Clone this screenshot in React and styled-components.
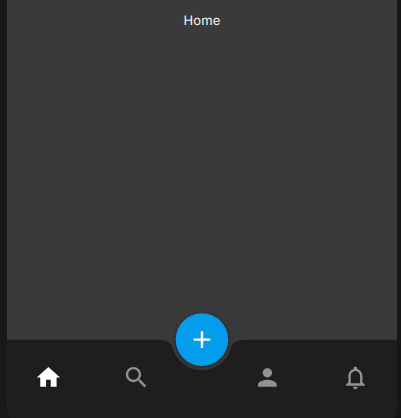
import React from "react";
import styled, { createGlobalStyle } from "styled-components";

const GlobalStyle = createGlobalStyle`
  * { box-sizing: border-box; }
  html, body { margin: 0; padding: 0; background: #191919; overflow: hidden; }
  button { border: 0; padding: 0; background: none; }
`;

const Page = styled.div`
  width: 401px;
  height: 418px;
  padding: 0 4px 0 7px;
  background: linear-gradient(to right, #191919 50%, #161616 50%);
`;

const Screen = styled.div`
  display: flex;
  flex-direction: column;
  height: 100%;
  background: #3a3a3a;
  border-bottom-left-radius: 4px 20px;
  border-bottom-right-radius: 4px 20px;
  overflow: hidden;
`;

const Content = styled.main`
  flex: 1;
  padding-top: 13px;
  color: #f8f8f8;
  font: 13px/16px Inter, "Liberation Sans", sans-serif;
  letter-spacing: 0.1px;
  text-align: center;
  text-rendering: geometricPrecision;
`;

const TabBar = styled.nav`
  position: relative;
  display: flex;
  justify-content: space-between;
  height: 79px;
  padding: 24px 28px 0 27px;
  border-bottom: 1px solid #171717;
`;

const BarShape = styled.svg`
  position: absolute;
  inset: 0;
`;

const TabGroup = styled.div`
  position: relative;
  display: flex;
  gap: 60px;
`;

const Tab = styled.button`
  width: 28px;
  height: 28px;
  color: ${({ $active }) => ($active ? "#ffffff" : "#929292")};

  svg {
    display: block;
    width: 28px;
    height: 28px;
    fill: currentColor;
    transform: translate(0.4px, 0.5px);
  }
`;

const AddButton = styled.button`
  position: absolute;
  top: -26px;
  left: 50%;
  display: flex;
  align-items: center;
  justify-content: center;
  width: 53px;
  height: 53px;
  margin-left: -27px;
  border-radius: 50%;
  background: #049deb;
  box-shadow: 0 1px 5px rgba(0, 0, 0, 0.4);
  transform: translate(0.45px, 0.1px) scale(0.992);

  svg {
    width: 29px;
    height: 29px;
    fill: #ffffff;
  }
`;

const PATHS = {
  home: "M10 20v-6h4v6h5v-8h3L12 3 2 12h3v8z",
  search:
    "M15.5 14h-.79l-.28-.27C15.41 12.59 16 11.11 16 9.5 16 5.91 13.09 3 9.5 3S3 5.91 3 9.5 5.91 16 9.5 16c1.61 0 3.09-.59 4.23-1.57l.27.28v.79l5 4.99L20.49 19l-4.99-5zm-6 0C7.01 14 5 11.99 5 9.5S7.01 5 9.5 5 14 7.01 14 9.5 11.99 14 9.5 14z",
  person:
    "M12 12c2.21 0 4-1.79 4-4s-1.79-4-4-4-4 1.79-4 4 1.79 4 4 4zm0 2c-2.67 0-8 1.34-8 4v2h16v-2c0-2.66-5.33-4-8-4z",
  bell:
    "M12 22c1.1 0 2-.9 2-2h-4c0 1.1.9 2 2 2zm6-6v-5c0-3.07-1.63-5.64-4.5-6.32V4c0-.83-.67-1.5-1.5-1.5s-1.5.67-1.5 1.5v.68C7.64 5.36 6 7.92 6 11v5l-2 2v1h16v-1l-2-2zm-2 1H8v-6c0-2.48 1.51-4.5 4-4.5s4 2.02 4 4.5v6z",
  add: "M19 13h-6v6h-2v-6H5v-2h6V5h2v6h6v2z",
};

const Icon = ({ name }) => (
  <svg viewBox="0 0 24 24" aria-hidden="true">
    <path d={PATHS[name]} />
  </svg>
);

const TabButton = ({ icon, label, active }) => (
  <Tab $active={active} aria-label={label}>
    <Icon name={icon} />
  </Tab>
);

export default function App() {
  return (
    <>
      <GlobalStyle />
      <Page>
        <Screen>
          <Content>Home</Content>
          <TabBar>
            <BarShape width="390" height="79" viewBox="0 0 390 79" aria-hidden="true">
              <path
                d="M0 .7H150C158 .7 163 2 165.4 8A30.2 30.2 0 0 0 224.2 8C226.6 2 231.6 .7 239.6 .7H390V79H0Z"
                fill="#1e1e1e"
              />
            </BarShape>
            <TabGroup>
              <TabButton icon="home" label="Home" active />
              <TabButton icon="search" label="Search" />
            </TabGroup>
            <AddButton aria-label="Add">
              <Icon name="add" />
            </AddButton>
            <TabGroup>
              <TabButton icon="person" label="Profile" />
              <TabButton icon="bell" label="Notifications" />
            </TabGroup>
          </TabBar>
        </Screen>
      </Page>
    </>
  );
}
